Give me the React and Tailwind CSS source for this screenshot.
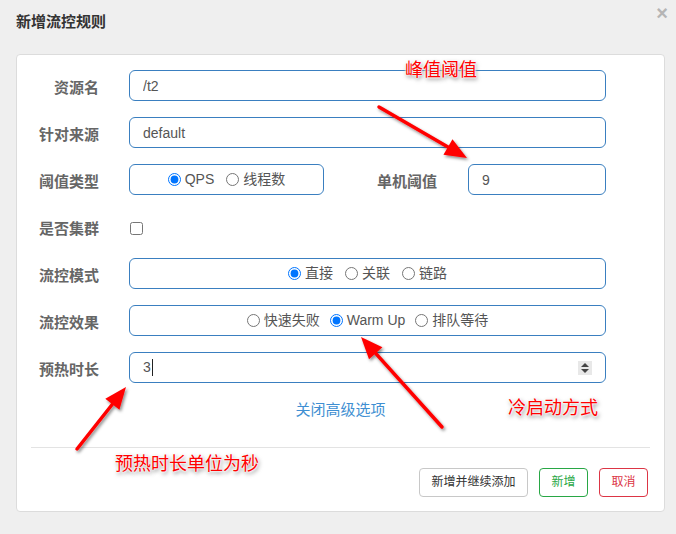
import React from 'react'

const font = { fontFamily: '"Liberation Sans", "Noto Sans CJK SC", sans-serif' }

function arrowHead(x1, y1, x2, y2, len = 22, half = 9) {
  const dx = x2 - x1
  const dy = y2 - y1
  const d = Math.hypot(dx, dy)
  const ux = dx / d
  const uy = dy / d
  const bx = x2 - ux * len
  const by = y2 - uy * len
  const p1 = `${bx - uy * half},${by + ux * half}`
  const p2 = `${bx + uy * half},${by - ux * half}`
  return { points: `${x2},${y2} ${p1} ${p2}`, bx, by }
}

function Arrow({ x1, y1, x2, y2 }) {
  const h = arrowHead(x1, y1, x2, y2)
  return (
    <g filter="url(#shadow)">
      <line x1={x1} y1={y1} x2={h.bx} y2={h.by} stroke="#ff0000" strokeWidth="3.5" strokeLinecap="round" />
      <polygon points={h.points} fill="#ff0000" />
    </g>
  )
}

function Label({ children, className = '' }) {
  return (
    <div className={`mt-[5px] text-right text-[15px] font-bold text-[#666] ${className}`}>{children}</div>
  )
}

function Radio({ label, checked, name }) {
  return (
    <label className="flex items-center gap-[4px] text-[14px] text-[#555]">
      <input type="radio" name={name} defaultChecked={checked} className="m-0 h-[13px] w-[13px]" />
      <span>{label}</span>
    </label>
  )
}

const boxCls = 'h-[31px] rounded-[6px] border border-[#3a7fc0] bg-white'
const noteCls = 'pointer-events-none absolute text-[18px] leading-[22px] text-[#ff0000] [text-shadow:0_0_2px_#fff,0_0_2px_#fff,0_0_3px_#fff,1px_2px_4px_#666]'
const noteFont = { fontFamily: '"Noto Sans CJK SC", sans-serif' }

export default function App() {
  return (
    <div className="relative h-[534px] w-[676px] overflow-hidden bg-[#efefef]" style={font}>
      <div className="flex h-[45px] items-center justify-between pl-4 pr-2">
        <h3 className="text-[15px] font-bold text-[#333]">新增流控规则</h3>
        <span className="-mt-[20px] text-[20px] font-bold leading-none text-[#b5b5b5]">×</span>
      </div>

      <div className="mx-4 mt-[9px] flex h-[458px] w-[649px] flex-col rounded-[4px] border border-[#dcdcdc] bg-white pt-[15px]">
        <div className="flex flex-col gap-4">
          <div className="flex items-center">
            <Label className="w-[82px]">资源名</Label>
            <input className={`${boxCls} ml-[30px] w-[477px] px-[13px] text-[14px] text-[#555] outline-none`} defaultValue="/t2" />
          </div>
          <div className="flex items-center">
            <Label className="w-[82px]">针对来源</Label>
            <input className={`${boxCls} ml-[30px] w-[477px] px-[13px] text-[14px] text-[#555] outline-none`} defaultValue="default" />
          </div>
          <div className="flex items-center">
            <Label className="w-[82px]">阈值类型</Label>
            <div className={`${boxCls} ml-[30px] flex w-[195px] items-center justify-center gap-[12px]`}>
              <Radio name="grade" label="QPS" checked />
              <Radio name="grade" label="线程数" />
            </div>
            <Label className="w-[113px]">单机阈值</Label>
            <input className={`${boxCls} ml-[31px] w-[138px] px-[13px] text-[14px] text-[#555] outline-none`} defaultValue="9" />
          </div>
          <div className="flex h-[31px] items-center">
            <Label className="w-[82px]">是否集群</Label>
            <input type="checkbox" className="ml-[31px] mt-[3px] h-[13px] w-[13px]" />
          </div>
          <div className="flex items-center">
            <Label className="w-[82px]">流控模式</Label>
            <div className={`${boxCls} ml-[30px] flex w-[477px] items-center justify-center gap-[12px]`}>
              <Radio name="strategy" label="直接" checked />
              <Radio name="strategy" label="关联" />
              <Radio name="strategy" label="链路" />
            </div>
          </div>
          <div className="flex items-center">
            <Label className="w-[82px]">流控效果</Label>
            <div className={`${boxCls} ml-[30px] flex w-[477px] items-center justify-center gap-[10px]`}>
              <Radio name="behavior" label="快速失败" />
              <Radio name="behavior" label="Warm Up" checked />
              <Radio name="behavior" label="排队等待" />
            </div>
          </div>
          <div className="flex items-center">
            <Label className="w-[82px]">预热时长</Label>
            <div className={`${boxCls} relative ml-[30px] flex w-[477px] items-center px-[13px] text-[14px] text-[#555]`}>
              <span>3</span>
              <span className="ml-[1px] h-[17px] w-[1px] bg-[#222]" />
              <span className="absolute right-[13px] top-[8px] flex h-[14px] w-[14px] flex-col items-center justify-center gap-[2px] bg-[#e8e8e8]">
                <span className="h-0 w-0 border-x-[4px] border-b-[4px] border-x-transparent border-b-[#444]" />
                <span className="h-0 w-0 border-x-[4px] border-t-[4px] border-x-transparent border-t-[#444]" />
              </span>
            </div>
          </div>
        </div>

        <div className="mt-[16px] text-center text-[15px] text-[#3f8fd2]">关闭高级选项</div>

        <div className="mx-[14px] mt-[25px] border-t border-[#e3e3e3]" />

        <div className="mr-[16px] mt-[20px] flex justify-end gap-[11px]">
          <button className="h-[29px] w-[109px] rounded-[4px] border border-[#c8c8c8] bg-white text-[12px] text-[#333]">新增并继续添加</button>
          <button className="h-[29px] w-[49px] rounded-[4px] border border-[#28a745] bg-white text-[12px] text-[#28a745]">新增</button>
          <button className="h-[29px] w-[49px] rounded-[4px] border border-[#dc3545] bg-white text-[12px] text-[#dc3545]">取消</button>
        </div>
      </div>

      <svg className="pointer-events-none absolute inset-0" width="676" height="534">
        <defs>
          <filter id="shadow" x="-20%" y="-20%" width="140%" height="140%">
            <feDropShadow dx="1.5" dy="2" stdDeviation="1.5" floodColor="#000" floodOpacity="0.45" />
          </filter>
        </defs>
        <Arrow x1={379} y1={107} x2={467} y2={158} />
        <Arrow x1={442} y1={427} x2={361} y2={337} />
        <Arrow x1={77} y1={449} x2={126} y2={387} />
      </svg>

      <div className={`${noteCls} left-[405px] top-[57px]`} style={noteFont}>峰值阈值</div>
      <div className={`${noteCls} left-[508px] top-[395px]`} style={noteFont}>冷启动方式</div>
      <div className={`${noteCls} left-[115px] top-[451px]`} style={noteFont}>预热时长单位为秒</div>
    </div>
  )
}
